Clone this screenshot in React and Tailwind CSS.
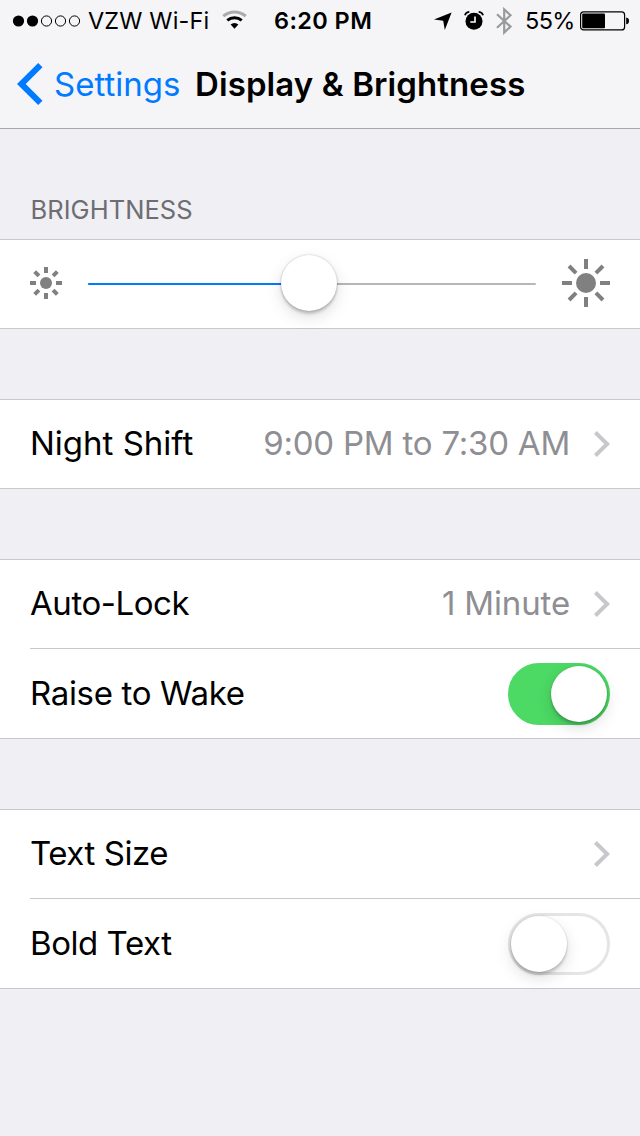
import { useState } from 'react';

function Chevron() {
  return (
    <svg width="16" height="26" viewBox="0 0 16 26" fill="none" className="ml-6 shrink-0">
      <path d="M1.4 1.5L13.2 13L1.4 24.5" stroke="#c7c7cc" strokeWidth="4" />
    </svg>
  );
}

function Sun({ size, radius, inner, outer }) {
  return (
    <svg width={size} height={size} viewBox={`${-size / 2} ${-size / 2} ${size} ${size}`} className="shrink-0">
      <circle r={radius} fill="#808080" />
      {[0, 45, 90, 135, 180, 225, 270, 315].map((angle) => (
        <line
          key={angle}
          x1={inner}
          x2={outer}
          y1="0"
          y2="0"
          stroke="#808080"
          strokeWidth="4"
          transform={`rotate(${angle})`}
        />
      ))}
    </svg>
  );
}

function Toggle({ checked, onChange, label }) {
  return (
    <button
      role="switch"
      aria-checked={checked}
      aria-label={label}
      onClick={() => onChange(!checked)}
      className={`flex h-[62px] w-[102px] shrink-0 items-center rounded-full border-[3px] ${
        checked ? 'justify-end border-[#4cd964] bg-[#4cd964]' : 'justify-start border-[#e5e5e5] bg-white'
      }`}
    >
      <span className="size-14 rounded-full bg-white shadow-[0_6px_16px_rgba(0,0,0,0.13),0_3px_3px_rgba(0,0,0,0.18),0_0_2px_rgba(0,0,0,0.15)]" />
    </button>
  );
}

function StatusBar() {
  return (
    <div className="flex h-10 items-center pl-3 text-[23.5px] leading-10">
      <svg width="70" height="12" viewBox="0 0 70 12" className="mt-px shrink-0">
        {[0, 1, 2, 3, 4].map((i) => (
          <circle
            key={i}
            cx={6.5 + i * 14}
            cy="6"
            r={i < 2 ? 5.6 : 5.1}
            fill={i < 2 ? '#000' : 'none'}
            stroke={i < 2 ? 'none' : '#000'}
            strokeWidth="1"
          />
        ))}
      </svg>
      <div className="ml-1.5 w-[123px] shrink-0 whitespace-nowrap pt-0.5 tracking-[0.15px]">VZW Wi-Fi</div>
      <svg width="26" height="20" viewBox="0 0 26 20" fill="none" className="ml-[11px] shrink-0">
        <path d="M1.3 6.2A17 17 0 0 1 23.7 6.2" stroke="#aaabad" strokeWidth="3" />
        <path d="M5.3 10.4A11 11 0 0 1 19.7 10.4" stroke="#000" strokeWidth="3" />
        <path d="M12.5 18.8L8.6 14.6A5.8 5.8 0 0 1 16.4 14.6Z" fill="#000" />
      </svg>
      <div className="ml-[26px] w-[160px] shrink-0 whitespace-nowrap pt-0.5 font-semibold tracking-[0.4px]">6:20 PM</div>
      <svg width="18" height="18" viewBox="0 0 18 18" className="mt-px shrink-0">
        <path d="M17.6 .5L10.8 18L9.2 8.8L0 7.5Z" fill="#000" />
      </svg>
      <svg width="20" height="19" viewBox="0 0 20 19" fill="none" className="ml-3 shrink-0">
        <circle cx="10" cy="10.3" r="8.5" fill="#000" />
        <path d="M.9 4.2Q1.8 1.2 5.3 .8M14.7 .8Q18.2 1.2 19.1 4.2" stroke="#000" strokeWidth="1.7" />
        <path d="M11 5.5V11H6.3" stroke="#fff" strokeWidth="1.6" />
      </svg>
      <svg width="17" height="28" viewBox="0 0 17 28" fill="none" className="ml-3 mt-px shrink-0">
        <path d="M1 7.2L14.5 19.6L8.2 25.6V2.4L14.5 8.2L1 20.7" stroke="#999a9c" strokeWidth="2.2" />
      </svg>
      <div className="ml-3 w-[55px] shrink-0 whitespace-nowrap pt-0.5 tracking-[-0.6px]">55%</div>
      <svg width="50" height="20" viewBox="0 0 50 20" className="mt-px shrink-0">
        <rect x=".6" y=".9" width="44" height="18" rx="3" fill="none" stroke="#000" strokeWidth="1.2" />
        <rect x="2.2" y="2.5" width="22.8" height="14.8" rx="1" fill="#000" />
        <path d="M46.2 6.5Q49 7 49 9.9T46.2 13.3Z" fill="#000" />
      </svg>
    </div>
  );
}

function Row({ label, className, children }) {
  return (
    <div className={`flex items-center pr-[30px] ${className}`}>
      <div className="mr-auto whitespace-nowrap">{label}</div>
      {children}
    </div>
  );
}

export default function App() {
  const [raiseToWake, setRaiseToWake] = useState(true);
  const [boldText, setBoldText] = useState(false);
  const [brightness] = useState(49.33);

  return (
    <div className="h-[1136px] w-[640px] overflow-hidden bg-[#efeff4] font-['Inter',sans-serif] text-[33px] text-black">
      <header className="h-[129px] border-b border-[#a7a7aa] bg-[#f5f5f7]">
        <StatusBar />
        <div className="flex h-[88px] items-center pl-[17px]">
          <svg width="26" height="42" viewBox="0 0 26 42" className="shrink-0">
            <path d="M21.2 0L25.5 4.2L8.7 21L25.5 37.8L21.2 42L0 21Z" fill="#007aff" />
          </svg>
          <div className="ml-[11px] w-[141px] shrink-0 whitespace-nowrap pt-0.5 text-[#007aff]">Settings</div>
          <h1 className="whitespace-nowrap pt-0.5 font-semibold tracking-[0.1px]">Display &amp; Brightness</h1>
        </div>
      </header>

      <main>
        <h2 className="flex h-[110px] items-end pb-[13px] pl-[30.5px] text-[25.5px] leading-8 tracking-[0.05px] text-[#6d6d72]">
          BRIGHTNESS
        </h2>

        {/* Brightness slider */}
        <section className="flex h-[90px] items-center border-y border-[#c8c7cc] bg-white px-[30px] pb-0.5">
          <Sun size={32} radius={6} inner={10} outer={16} />
          <div className="relative mx-[26px] h-14 flex-1">
            <div className="mt-[28px] flex h-0.5 overflow-hidden rounded-full bg-[#b7b7b7]">
              <div className="bg-[#007aff]" style={{ width: `${brightness}%` }} />
            </div>
            <div
              className="absolute top-0 size-14 -translate-x-1/2 rounded-full bg-white shadow-[0_6px_16px_rgba(0,0,0,0.13),0_3px_3px_rgba(0,0,0,0.18),0_0_2px_rgba(0,0,0,0.25)]"
              style={{ left: `${brightness}%` }}
            />
          </div>
          <Sun size={48} radius={10} inner={14} outer={24} />
        </section>

        <section className="mt-[70px] h-[90px] border-y border-[#c8c7cc] bg-white pl-[30px]">
          <Row label="Night Shift" className="h-[88px]">
            <span className="whitespace-nowrap tracking-[-0.22px] text-[#8e8e93]">9:00 PM to 7:30 AM</span>
            <Chevron />
          </Row>
        </section>

        <section className="mt-[70px] h-[180px] divide-y divide-[#c8c7cc] border-y border-[#c8c7cc] bg-white pl-[30px]">
          <Row label="Auto-Lock" className="h-[89px] tracking-[-0.45px]">
            <span className="whitespace-nowrap tracking-[-0.15px] text-[#8e8e93]">1 Minute</span>
            <Chevron />
          </Row>
          <Row label="Raise to Wake" className="h-[89px] tracking-[-0.33px]">
            <Toggle checked={raiseToWake} onChange={setRaiseToWake} label="Raise to Wake" />
          </Row>
        </section>

        <section className="mt-[70px] h-[180px] divide-y divide-[#c8c7cc] border-y border-[#c8c7cc] bg-white pl-[30px]">
          <Row label="Text Size" className="h-[89px] tracking-[-0.45px]">
            <Chevron />
          </Row>
          <Row label="Bold Text" className="h-[89px] tracking-[-0.45px]">
            <Toggle checked={boldText} onChange={setBoldText} label="Bold Text" />
          </Row>
        </section>
      </main>
    </div>
  );
}
